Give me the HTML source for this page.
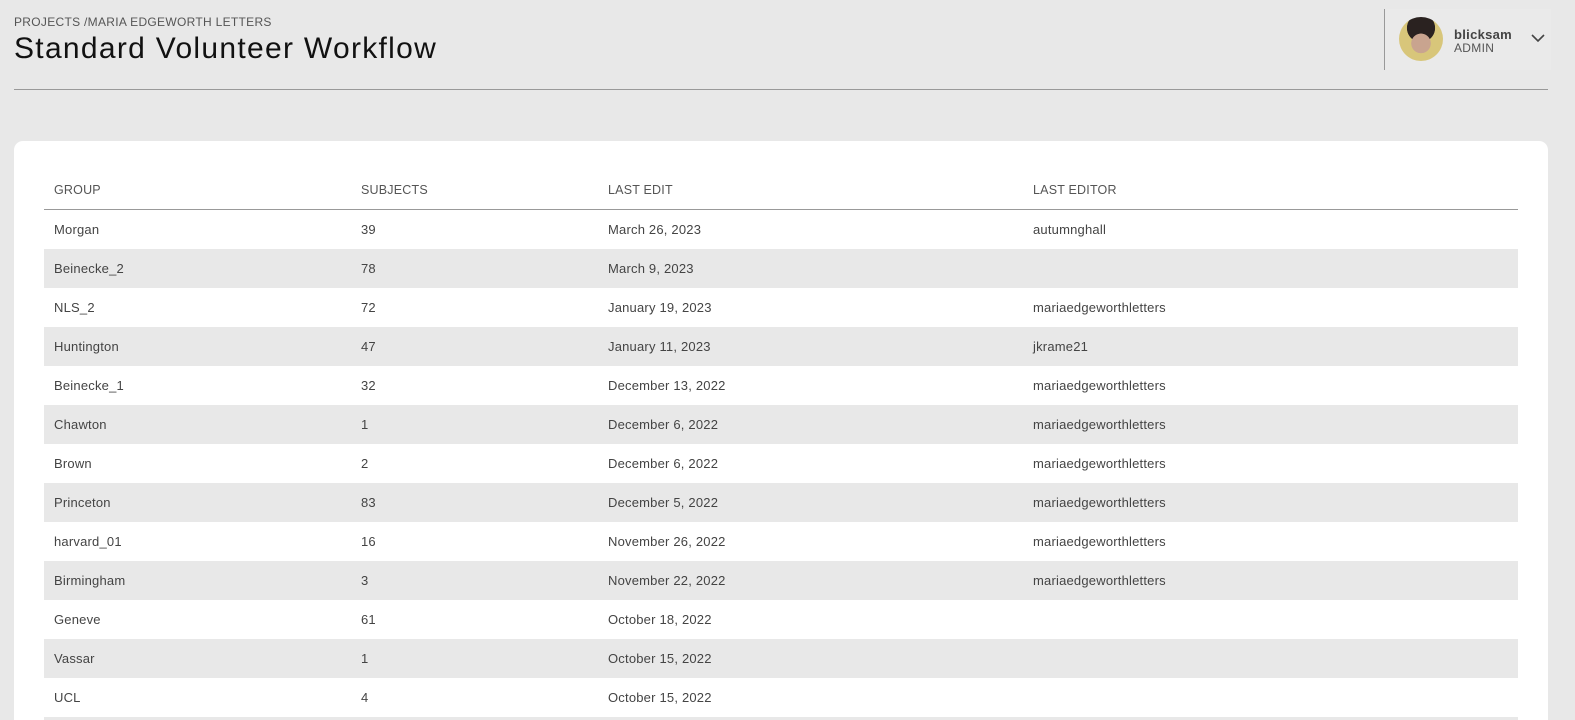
<!DOCTYPE html>
<html><head><style>
html,body{margin:0;width:1575px;height:720px;overflow:hidden}
body{background:#e8e8e8;font-family:"Liberation Sans",sans-serif;position:relative}
.bc{position:absolute;left:14px;top:15px;font-size:12px;color:#555;letter-spacing:.3px}
h1{position:absolute;left:14px;top:32px;margin:0;font-weight:400;font-size:30px;color:#111;letter-spacing:1.3px}
.hr{position:absolute;left:14px;top:89px;width:1534px;height:1px;background:#999}
.user{position:absolute;left:1384px;top:9px;width:166px;height:61px;border-left:1px solid #999;background:#eaeaea}
.av{position:absolute;left:14px;top:8px;width:44px;height:44px;border-radius:50%;background:radial-gradient(circle at 50% 60%,#c9a48f 0 28%,transparent 29%),radial-gradient(circle at 50% 25%,#2a2220 0 35%,transparent 36%),#d8c67a}
.un{position:absolute;left:69px;top:18px;font-size:13px;font-weight:700;color:#444;letter-spacing:.3px}
.ur{position:absolute;left:69px;top:32px;font-size:12px;color:#555;letter-spacing:.3px}
.chev{position:absolute;left:146px;top:24px}
.card{position:absolute;left:14px;top:141px;width:1534px;height:600px;background:#fff;border-radius:9px}
table{position:absolute;left:30px;top:30px;width:1474px;border-collapse:collapse;font-size:13px;color:#444;letter-spacing:.2px}
th{font-weight:400;text-align:left;height:38px;padding:0 0 0 10px;border-bottom:1px solid #999;font-size:12.5px;color:#555}
td{height:39px;padding:0 0 0 10px}
tr:nth-child(even) td{background:#e8e8e8}
</style></head><body>
<div class="bc">PROJECTS /MARIA EDGEWORTH LETTERS</div>
<h1>Standard Volunteer Workflow</h1>
<div class="hr"></div>
<div class="user"><div class="av"></div><div class="un">blicksam</div><div class="ur">ADMIN</div>
<svg class="chev" width="14" height="10" viewBox="0 0 14 10"><path d="M1 2l6 6 6-6" fill="none" stroke="#444" stroke-width="1.6"/></svg></div>
<div class="card"><table>
<thead><tr><th style="width:297px">GROUP</th><th style="width:237px">SUBJECTS</th><th style="width:415px">LAST EDIT</th><th>LAST EDITOR</th></tr></thead>
<tbody>
<tr><td>Morgan</td><td>39</td><td>March 26, 2023</td><td>autumnghall</td></tr>
<tr><td>Beinecke_2</td><td>78</td><td>March 9, 2023</td><td></td></tr>
<tr><td>NLS_2</td><td>72</td><td>January 19, 2023</td><td>mariaedgeworthletters</td></tr>
<tr><td>Huntington</td><td>47</td><td>January 11, 2023</td><td>jkrame21</td></tr>
<tr><td>Beinecke_1</td><td>32</td><td>December 13, 2022</td><td>mariaedgeworthletters</td></tr>
<tr><td>Chawton</td><td>1</td><td>December 6, 2022</td><td>mariaedgeworthletters</td></tr>
<tr><td>Brown</td><td>2</td><td>December 6, 2022</td><td>mariaedgeworthletters</td></tr>
<tr><td>Princeton</td><td>83</td><td>December 5, 2022</td><td>mariaedgeworthletters</td></tr>
<tr><td>harvard_01</td><td>16</td><td>November 26, 2022</td><td>mariaedgeworthletters</td></tr>
<tr><td>Birmingham</td><td>3</td><td>November 22, 2022</td><td>mariaedgeworthletters</td></tr>
<tr><td>Geneve</td><td>61</td><td>October 18, 2022</td><td></td></tr>
<tr><td>Vassar</td><td>1</td><td>October 15, 2022</td><td></td></tr>
<tr><td>UCL</td><td>4</td><td>October 15, 2022</td><td></td></tr>
<tr><td>&nbsp;</td><td></td><td></td><td></td></tr>
</tbody></table></div>
</body></html>
